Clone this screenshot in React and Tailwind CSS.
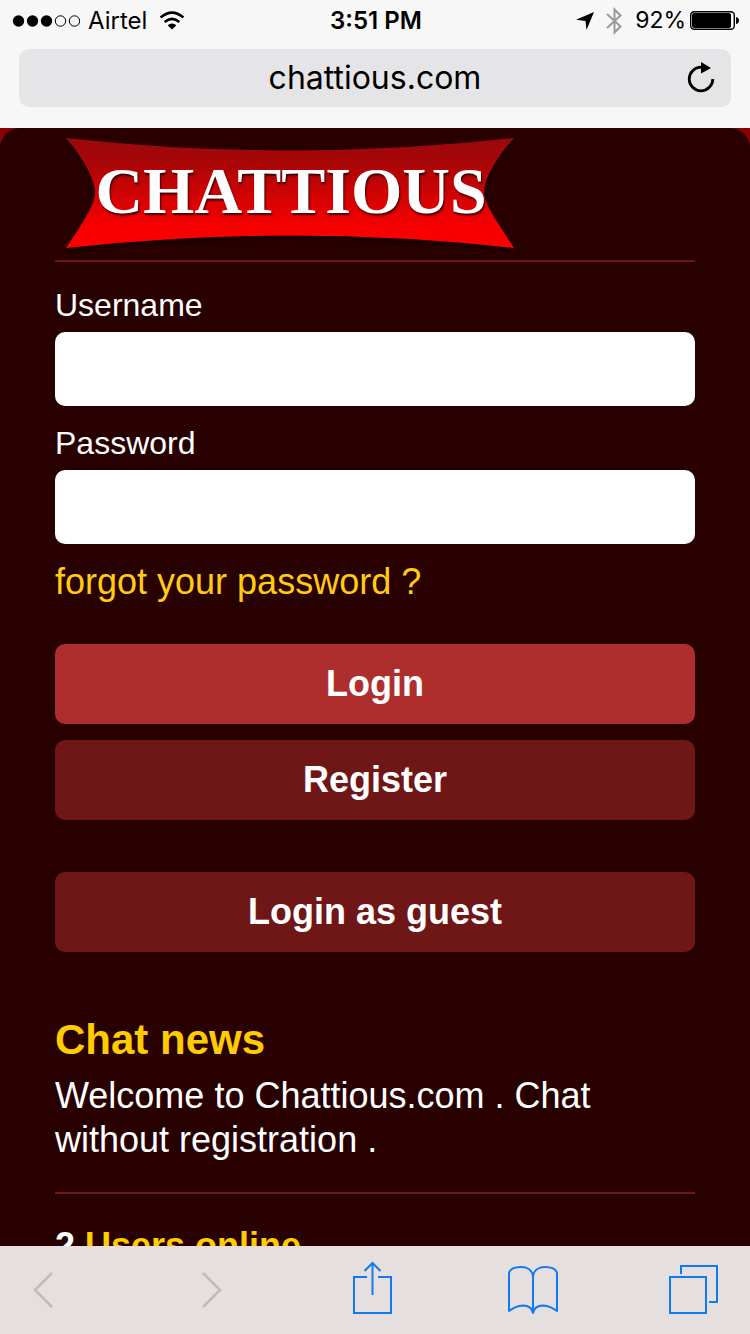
import React from "react";

const systemFont = "font-['Inter','Liberation_Sans',sans-serif]";

function StatusBar() {
  return (
    <div className="grid h-[41px] grid-cols-[1fr_auto_1fr] items-center pl-3 pr-[10px] text-[24px]">
      <div className="flex items-center gap-2">
        <svg width="68" height="12" viewBox="0 0 68 12" aria-hidden="true">
          <circle cx="6.5" cy="6" r="5.7" />
          <circle cx="20.5" cy="6" r="5.7" />
          <circle cx="34.5" cy="6" r="5.7" />
          <circle cx="48.5" cy="6" r="5.2" fill="none" stroke="#000" />
          <circle cx="62.5" cy="6" r="5.2" fill="none" stroke="#000" />
        </svg>
        <span>Airtel</span>
        <svg className="ml-1" width="26" height="19" viewBox="0 0 26 19" fill="none" stroke="#000" aria-label="Wi-Fi">
          <path d="M1.6 6.6 Q13 -3.2 24.4 6.6" strokeWidth="2.6" />
          <path d="M5.6 11 Q13 4.6 20.4 11" strokeWidth="2.6" />
          <path d="M8.6 14.2 Q13 10.8 17.4 14.2 L13 18.6 Z" fill="#000" stroke="none" />
        </svg>
      </div>
      <span className="font-semibold">3:51 PM</span>
      <div className="flex items-center justify-end">
        <svg className="mr-3" width="18" height="18" viewBox="0 0 18 18" aria-label="Location">
          <path d="M18 0 L10.5 18 L9.5 9 L0 7.8 Z" />
        </svg>
        <svg className="mr-3" width="17" height="28" viewBox="0 0 17 28" fill="none" stroke="#9a9a9b" strokeWidth="2" aria-label="Bluetooth">
          <path d="M1 7 L14.5 19.5 L8.5 25.5 V2.5 L14.5 8.5 L1 21" />
        </svg>
        <span className="mr-1 text-[23px]">92%</span>
        <svg width="50" height="19" viewBox="0 0 50 19" aria-label="Battery">
          <rect x="0.7" y="0.7" width="43.6" height="17.6" rx="3.5" fill="none" stroke="#000" strokeWidth="1.4" />
          <rect x="2" y="2" width="39" height="15" rx="2" />
          <path d="M46 6 Q49 6.5 49 9.5 Q49 12.5 46 13 Z" />
        </svg>
      </div>
    </div>
  );
}

function AddressBar() {
  return (
    <div className="mx-[19px] mt-2 grid h-[58px] grid-cols-[1fr_auto_1fr] items-center rounded-[10px] bg-[#e5e5e7] px-4">
      <span />
      <span className="text-[32px]">chattious.com</span>
      <button type="button" aria-label="Reload" className="justify-self-end">
        <svg width="28" height="32" viewBox="0 0 28 32">
          <path d="M25.8 17 A11.8 11.8 0 1 1 14 5.2" fill="none" stroke="#000" strokeWidth="2.8" />
          <path d="M14 0 L24 6 L14 11.5 Z" />
        </svg>
      </button>
    </div>
  );
}

function Logo() {
  return (
    <svg width="460" height="132" viewBox="0 0 460 132" className="block max-w-full" role="img" aria-label="Chattious">
      <defs>
        <linearGradient id="ribbon" x1="0" y1="0" x2="0" y2="1">
          <stop offset="0" stopColor="#9c080a" />
          <stop offset="0.2" stopColor="#a60608" />
          <stop offset="0.8" stopColor="#f60000" />
          <stop offset="1" stopColor="#ff0000" />
        </linearGradient>
      </defs>
      <path
        d="M11 10 Q234 35 459 10 C440 31 429 52 429 64 C429 75 441 92 459 120 Q234 95 11 120 C30 92 40 76 40 64 C40 52 29 31 11 10 Z"
        fill="url(#ribbon)"
        className="drop-shadow-[0_3px_2px_rgba(0,0,0,0.5)]"
      />
      <text
        x="236"
        y="85"
        textAnchor="middle"
        fill="#fff"
        className="font-['Liberation_Serif',serif] text-[66px] font-bold [text-shadow:1px_2px_2px_rgba(0,0,0,0.7)]"
      >
        CHATTIOUS
      </text>
    </svg>
  );
}

function Field({ id, label, type }) {
  return (
    <div className="flex flex-col gap-2">
      <label htmlFor={id} className="text-[32px] leading-[38px]">{label}</label>
      <input id={id} name={id} type={type} className="h-[74px] w-full rounded-[10px] bg-white px-4 text-[32px] text-black" />
    </div>
  );
}

const buttonBase = "h-20 w-full rounded-[10px] text-center text-[36px] font-bold";

const toolButton = "flex w-[50px] justify-center";

function Toolbar() {
  return (
    <nav className="flex h-[88px] shrink-0 items-center justify-between bg-[#e6dfdf] px-8 text-[#127af0]">
      <button type="button" aria-label="Back" disabled className="flex w-11 justify-start">
        <svg width="22" height="38" viewBox="0 0 22 38" fill="none" stroke="#c2bbbb" strokeWidth="2.5">
          <path d="M20 2 L3 19 L20 36" />
        </svg>
      </button>
      <button type="button" aria-label="Forward" disabled className={toolButton}>
        <svg width="22" height="38" viewBox="0 0 22 38" fill="none" stroke="#c2bbbb" strokeWidth="2.5">
          <path d="M2 2 L19 19 L2 36" />
        </svg>
      </button>
      <button type="button" aria-label="Share" className={toolButton}>
        <svg width="40" height="58" viewBox="0 0 40 58" fill="none" stroke="currentColor" strokeWidth="2">
          <path d="M15 16 H2 V52 H39 V16 H26" />
          <path d="M20.5 34 V2 M12.5 10 L20.5 2 L28.5 10" />
        </svg>
      </button>
      <button type="button" aria-label="Bookmarks" className={toolButton}>
        <svg width="52" height="50" viewBox="0 0 52 50" className="shrink-0" fill="none" stroke="currentColor" strokeWidth="2" strokeLinejoin="round">
          <path d="M26 11 C25 5 20 2 14 2 C8 2 3 4 2 8 V46 C6 43 10 41 16 40.5 C21 40.5 25 43 26 48 C27 43 31 40.5 36 40.5 C42 41 46 43 50 46 V8 C49 4 44 2 38 2 C32 2 27 5 26 11 Z M26 11 V48" />
        </svg>
      </button>
      <button type="button" aria-label="Tabs" className={toolButton}>
        <svg width="50" height="50" viewBox="0 0 50 50" fill="none" stroke="currentColor" strokeWidth="2">
          <path d="M2 12 H38 V48 H2 Z M13 9 V1 H49 V37 H41" />
        </svg>
      </button>
    </nav>
  );
}

export default function App() {
  return (
    <div className="flex h-screen flex-col overflow-hidden bg-[#8a0004]">
      <header className={`h-32 shrink-0 bg-[#f7f7f8] text-black ${systemFont}`}>
        <StatusBar />
        <AddressBar />
      </header>

      <main className="min-h-0 flex-1 overflow-hidden rounded-t-[20px] bg-[#290000] px-[55px] font-['Liberation_Sans',Arial,sans-serif] text-[36px] leading-[44px] text-white">
        <Logo />
        <hr className="border-t-2 border-[#701618]" />

        <form className="pt-6" onSubmit={(e) => e.preventDefault()}>
          <div className="flex flex-col gap-[18px]">
            <Field id="username" label="Username" type="text" />
            <Field id="password" label="Password" type="password" />
          </div>
          <a href="#forgot" className="mt-4 block text-[#ffcc11]">forgot your password ?</a>
          <div className="mt-10 flex flex-col gap-4">
            <button type="submit" className={`${buttonBase} bg-[#ae2e2e]`}>Login</button>
            <button type="button" className={`${buttonBase} bg-[#6f1717]`}>Register</button>
          </div>
          <button type="button" className={`${buttonBase} mt-[52px] bg-[#6f1717]`}>Login as guest</button>
        </form>

        <section className="mt-16">
          <h2 className="text-[42px] font-bold leading-[48px] text-[#ffcc00]">Chat news</h2>
          <p className="mt-[10px]">Welcome to Chattious.com . Chat without registration .</p>
        </section>

        <hr className="mt-[30px] border-t-2 border-[#701618]" />
        <h2 className="mt-[30px] font-bold">
          2 <span className="text-[#ffcc00]">Users online</span>
        </h2>
      </main>

      <Toolbar />
    </div>
  );
}
